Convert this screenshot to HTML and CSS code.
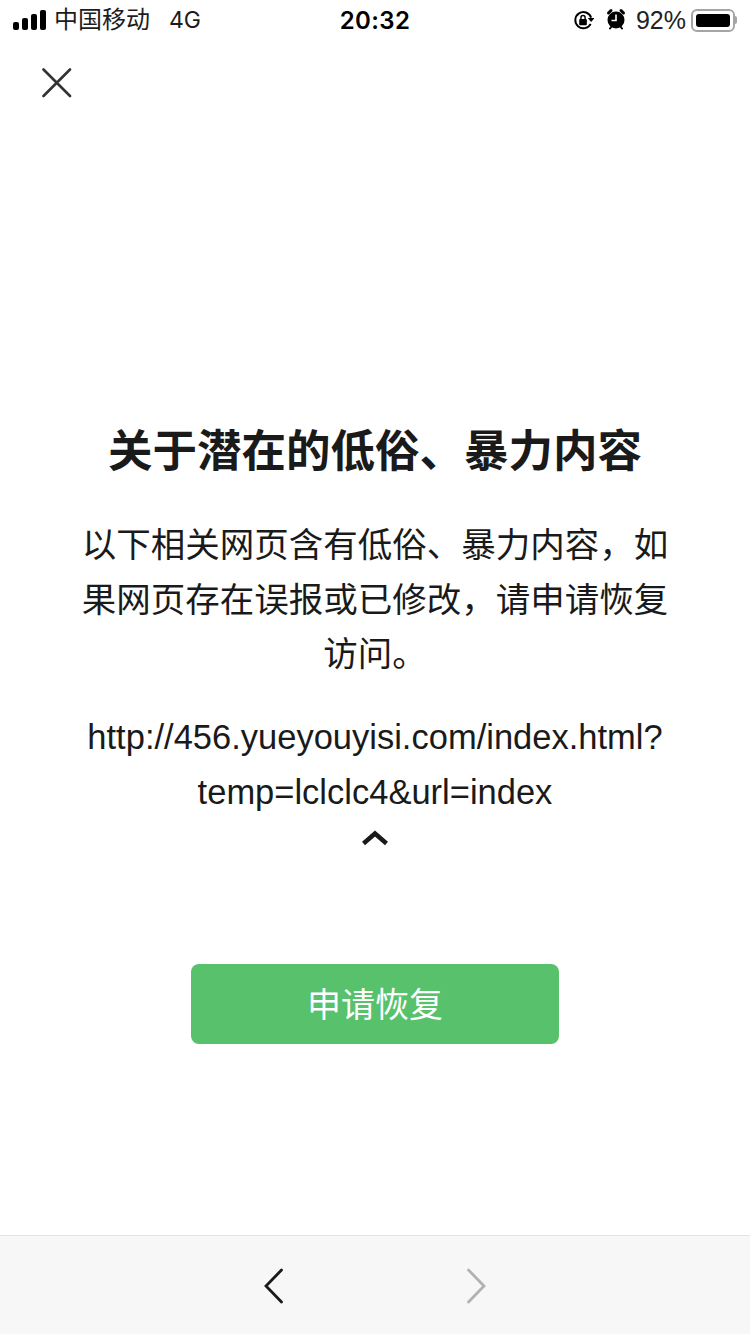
FILE: index.html
```html
<!DOCTYPE html>
<html lang="zh-CN">
<head>
    <meta charset="UTF-8">
    <meta name="viewport" content="width=device-width, initial-scale=1.0">
    <title>关于潜在的低俗、暴力内容</title>

    <link rel="stylesheet" href="styles.css">
</head>
<body>
    <section class="main">
        <div class="status_bar">
            <div class="status_left">
                <svg class="signal" width="34" height="22" viewBox="0 0 34 22">
                    <rect x="0" y="13" width="6" height="8" rx="2"/>
                    <rect x="9" y="9" width="6" height="12" rx="2"/>
                    <rect x="18" y="5" width="6" height="16" rx="2"/>
                    <rect x="27" y="1" width="6" height="20" rx="2"/>
                </svg>
                <span class="carrier">中国移动</span>
                <span class="network">4G</span>
            </div>
            <div class="status_time">20:32</div>
            <div class="status_right">
                <svg class="lock" width="21" height="21" viewBox="0 0 22 22">
                    <path d="M18.500 14.500A8.500 8.500 0 1 1 19 8" fill="none" stroke="#000" stroke-width="2"/>
                    <path d="M15.500 8.500h7l-3.500 4z"/>
                    <rect x="6.500" y="9.500" width="8" height="6.500" rx="1"/>
                    <path d="M8.300 10V8a2.200 2.200 0 0 1 4.400 0v2" fill="none" stroke="#000" stroke-width="1.500"/>
                </svg>
                <svg class="alarm" width="20" height="22" viewBox="0 0 20 22">
                    <circle cx="10" cy="12" r="8.500"/>
                    <path d="M2.500 5 5 2.500M17.500 5 15 2.500" stroke="#000" stroke-width="3" stroke-linecap="round"/>
                    <path d="M4 20.500l1.500-2M16 20.500l-1.500-2" stroke="#000" stroke-width="2" stroke-linecap="round"/>
                    <path d="M10 6.500v6H5.500" fill="none" stroke="#fff" stroke-width="1.600"/>
                </svg>
                <span class="percent">92%</span>
                <div class="battery">
                    <div class="battery_body"><div class="battery_level"></div></div>
                    <div class="battery_cap"></div>
                </div>
            </div>
        </div>

        <div class="close_row">
            <svg width="30" height="30" viewBox="0 0 30 30">
                <path d="M1.500 1.500 28 28M28 1.500 1.500 28" stroke="#333" stroke-width="2.600" stroke-linecap="round"/>
            </svg>
        </div>

        <div class="content">
            <h1 class="title">关于潜在的低俗、暴力内容</h1>
            <p class="desc">以下相关网页含有低俗、暴力内容&#65292;如果网页存在误报或已修改&#65292;请申请恢复访问。</p>
            <p class="url">http://456.yueyouyisi.com/index.html?<br>temp=lclclc4&amp;url=index</p>
            <svg class="collapse" width="28" height="16" viewBox="0 0 28 16">
                <path d="M2.500 13.500 14 3.500 25.500 13.500" fill="none" stroke="#1a1a1a" stroke-width="4.500"/>
            </svg>
            <button class="restore">申请恢复</button>
        </div>

        <div class="toolbar">
            <svg width="20" height="36" viewBox="0 0 20 36">
                <path d="M17.500 2 2 18 17.500 34" fill="none" stroke="#1a1a1a" stroke-width="2.800" stroke-linecap="round"/>
            </svg>
            <svg width="20" height="36" viewBox="0 0 20 36">
                <path d="M2.500 2 18 18 2.500 34" fill="none" stroke="#b2b2b2" stroke-width="2.800" stroke-linecap="round"/>
            </svg>
        </div>
    </section>
</body>
</html>
```

FILE: styles.css
```css
* {
    margin: 0;
    padding: 0;
    box-sizing: border-box;
    font-family: "Liberation Sans", "Noto Sans CJK SC", sans-serif;
}

body {
    background: #fff;
}

.main {
    width: 750px;
    height: 1334px;
    display: flex;
    flex-direction: column;
    color: #1a1a1a;
}

.status_bar {
    height: 40px;
    padding: 0 13px;
    display: grid;
    grid-template-columns: 1fr auto 1fr;
    align-items: center;
    color: #000;
    font-size: 24px;
}

.status_left {
    display: flex;
    align-items: center;
}

.signal {
    margin-right: 7px;
}

.carrier {
    font-size: 24px;
    line-height: 24px;
    color: #1c1c1c;
}

.network {
    margin-left: 19px;
    line-height: 24px;
    color: #1c1c1c;
    font-family: Inter, sans-serif;
    font-size: 23px;
}

.status_time {
    font-family: Inter, sans-serif;
    font-size: 24px;
    font-weight: 600;
    letter-spacing: 0.4px;
}

.status_right {
    display: flex;
    align-items: center;
    justify-content: flex-end;
}

.lock {
    margin-right: 12px;
}

.alarm {
    margin-right: 10px;
    margin-bottom: 2px;
}

.percent {
    font-size: 25px;
    color: #222;
    margin-right: 5px;
}

.battery {
    display: flex;
    align-items: center;
}

.battery_body {
    width: 44px;
    height: 23px;
    padding: 3px;
    border: 2px solid #a5a5a5;
    border-radius: 6px;
}

.battery_level {
    width: 34px;
    height: 100%;
    background: #000;
    border-radius: 3px;
}

.battery_cap {
    width: 2px;
    height: 8px;
    background: #a5a5a5;
    border-radius: 0 2px 2px 0;
}

.close_row {
    height: 87px;
    padding: 28px 0 0 42px;
}

.content {
    flex: 1;
    padding: 0 80px;
    text-align: center;
}

.title {
    margin-top: 295px;
    margin-left: -20px;
    margin-right: -20px;
    font-size: 44.5px;
    line-height: 60px;
    font-weight: bold;
}

.desc {
    margin-top: 36px;
    font-size: 34.5px;
    line-height: 54.5px;
}

.url {
    margin-top: 28.500px;
    margin-left: -20px;
    margin-right: -20px;
    font-size: 34.5px;
    line-height: 54.500px;
}

.collapse {
    display: block;
    margin: 11px auto 0;
}

.restore {
    display: block;
    width: 368px;
    height: 80px;
    margin: 118px auto 0;
    padding-bottom: 4px;
    border: none;
    border-radius: 8px;
    background: #58c16c;
    color: #fff;
    font-size: 34px;
}

.toolbar {
    height: 99px;
    padding-top: 2px;
    border-top: 1px solid #e4e4e4;
    background: #f7f7f7;
    display: flex;
    align-items: center;
    justify-content: center;
    gap: 182px;
}
```
